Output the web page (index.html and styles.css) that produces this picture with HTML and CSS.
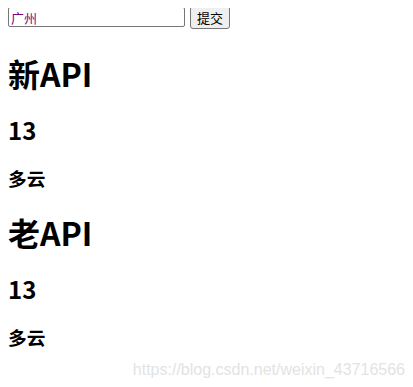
FILE: index.html
```html
<!DOCTYPE html>
<html lang="zh-CN">
<head>
    <meta charset="UTF-8">
    <meta name="viewport" content="width=device-width, initial-scale=1.0">
    <title>天气</title>
    <link rel="stylesheet" href="styles.css">
</head>
<body>
    <div class="search">
        <input type="text" id="city" value="广州">
        <button type="button" id="submit_btn">提交</button>
    </div>
    <h1>新API</h1>
    <h2>13</h2>
    <h3>多云</h3>
    <h1>老API</h1>
    <h2>13</h2>
    <h3>多云</h3>
    <span class="mark">https://blog.csdn.net/weixin_43716566</span>
</body>
</html>
```

FILE: styles.css
```css
body {
    font-family:"Noto Sans CJK SC", "Liberation Sans", sans-serif;
    position:relative; min-height:371px;
}
.search {display:flex; align-items:flex-start; gap:5px; height:24px;}
.search #city {
    width:177px; height:20px; box-sizing:border-box; border:1px solid #767676;
    border-radius:2px; padding:0 2px; font-size:13px; color:#800080;
    font-family:"Noto Sans CJK SC", sans-serif; margin-top:-1px;
}
.search #submit_btn {
    height:23px; padding:0 6px; font-size:13px; border:1px solid #767676;
    border-radius:3px; background:#efefef; color:#000; margin-top:-2px;
    font-family:"Noto Sans CJK SC", sans-serif;
}
h1 {font-size:32px; line-height:41px; margin:21px 0;}
h2 {font-size:24px; line-height:30px; margin:20px 0;}
h3 {font-size:18.72px; line-height:26px; margin:19px 0;}
.mark {
    position:absolute; right:0; bottom:0; color:#e3e3e3;
    font-family:"Liberation Sans", sans-serif; font-size:16px;
}
```
